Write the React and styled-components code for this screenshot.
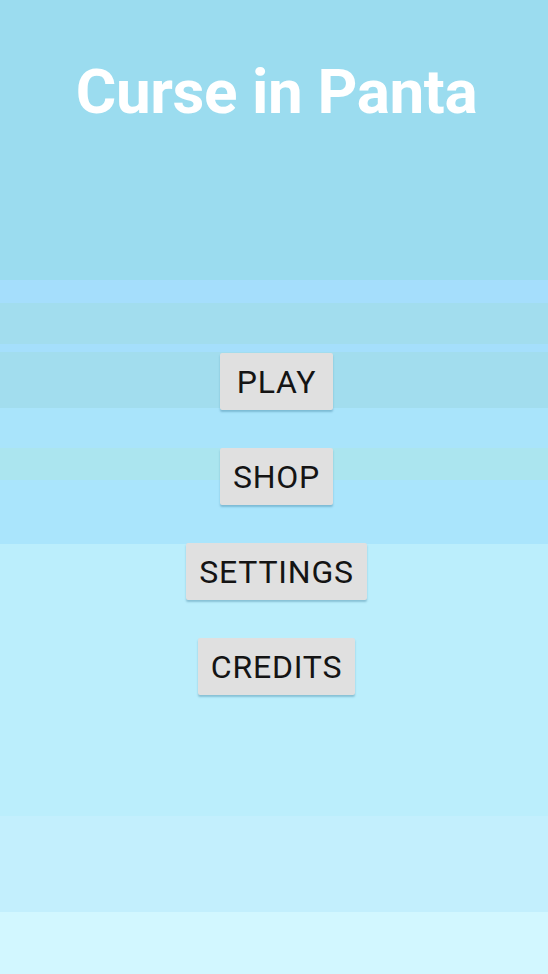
import React from 'react';
import styled, {createGlobalStyle} from 'styled-components';

const Global = createGlobalStyle`
    html, body {
        margin: 0;
        padding: 0;
    }
    body {
        font-family: Roboto, "Noto Sans", sans-serif;
    }
`

// banded sky, like the low-colour gif it came from
const Screen = styled.div`
    width: 548px;
    height: 974px;
    box-sizing: border-box;
    padding-left: 5px;
    display: flex;
    flex-direction: column;
    align-items: center;
    overflow: hidden;
    background: linear-gradient(
        to bottom,
        #9bdcef 0px, #9bdcef 280px,
        #a5defc 280px, #a5defc 303px,
        #a2ddee 303px, #a2ddee 344px,
        #a5dffc 344px, #a5dffc 352px,
        #a2ddee 352px, #a2ddee 408px,
        #a9e4fb 408px, #a9e4fb 448px,
        #abe5ef 448px, #abe5ef 480px,
        #aae5fc 480px, #aae5fc 544px,
        #bbeefc 544px, #bbeefc 816px,
        #c3effd 816px, #c3effd 912px,
        #d2f7ff 912px, #d2f7ff 974px
    );
`

const Title = styled.h1`
    margin: 56px 0 0 0;
    font-family: Roboto, "Liberation Sans", sans-serif;
    font-weight: 700;
    font-size: 62px;
    line-height: 72px;
    color: #ffffff;
    letter-spacing: -0.4px;
`

const Menu = styled.div`
    display: flex;
    flex-direction: column;
    align-items: center;
    gap: 38px;
    margin-top: 225px;
`

const MenuButton = styled.button`
    min-width: 113px;
    height: 57px;
    padding: 0 13px;
    border: none;
    border-radius: 2px;
    background: #e0e0e0;
    color: #141414;
    font-family: Roboto, "Liberation Sans", sans-serif;
    font-size: 32px;
    font-weight: 400;
    letter-spacing: 0.8px;
    box-shadow: 0 2px 2px rgba(40, 110, 140, 0.35);
    cursor: pointer;
`

const items = ['PLAY', 'SHOP', 'SETTINGS', 'CREDITS'];

export default function App() {
    return (
        <Screen>
            <Global/>
            <Title>Curse in Panta</Title>
            <Menu>
                {items.map(label => (
                    <MenuButton key={label}>{label}</MenuButton>
                ))}
            </Menu>
        </Screen>
    );
}
